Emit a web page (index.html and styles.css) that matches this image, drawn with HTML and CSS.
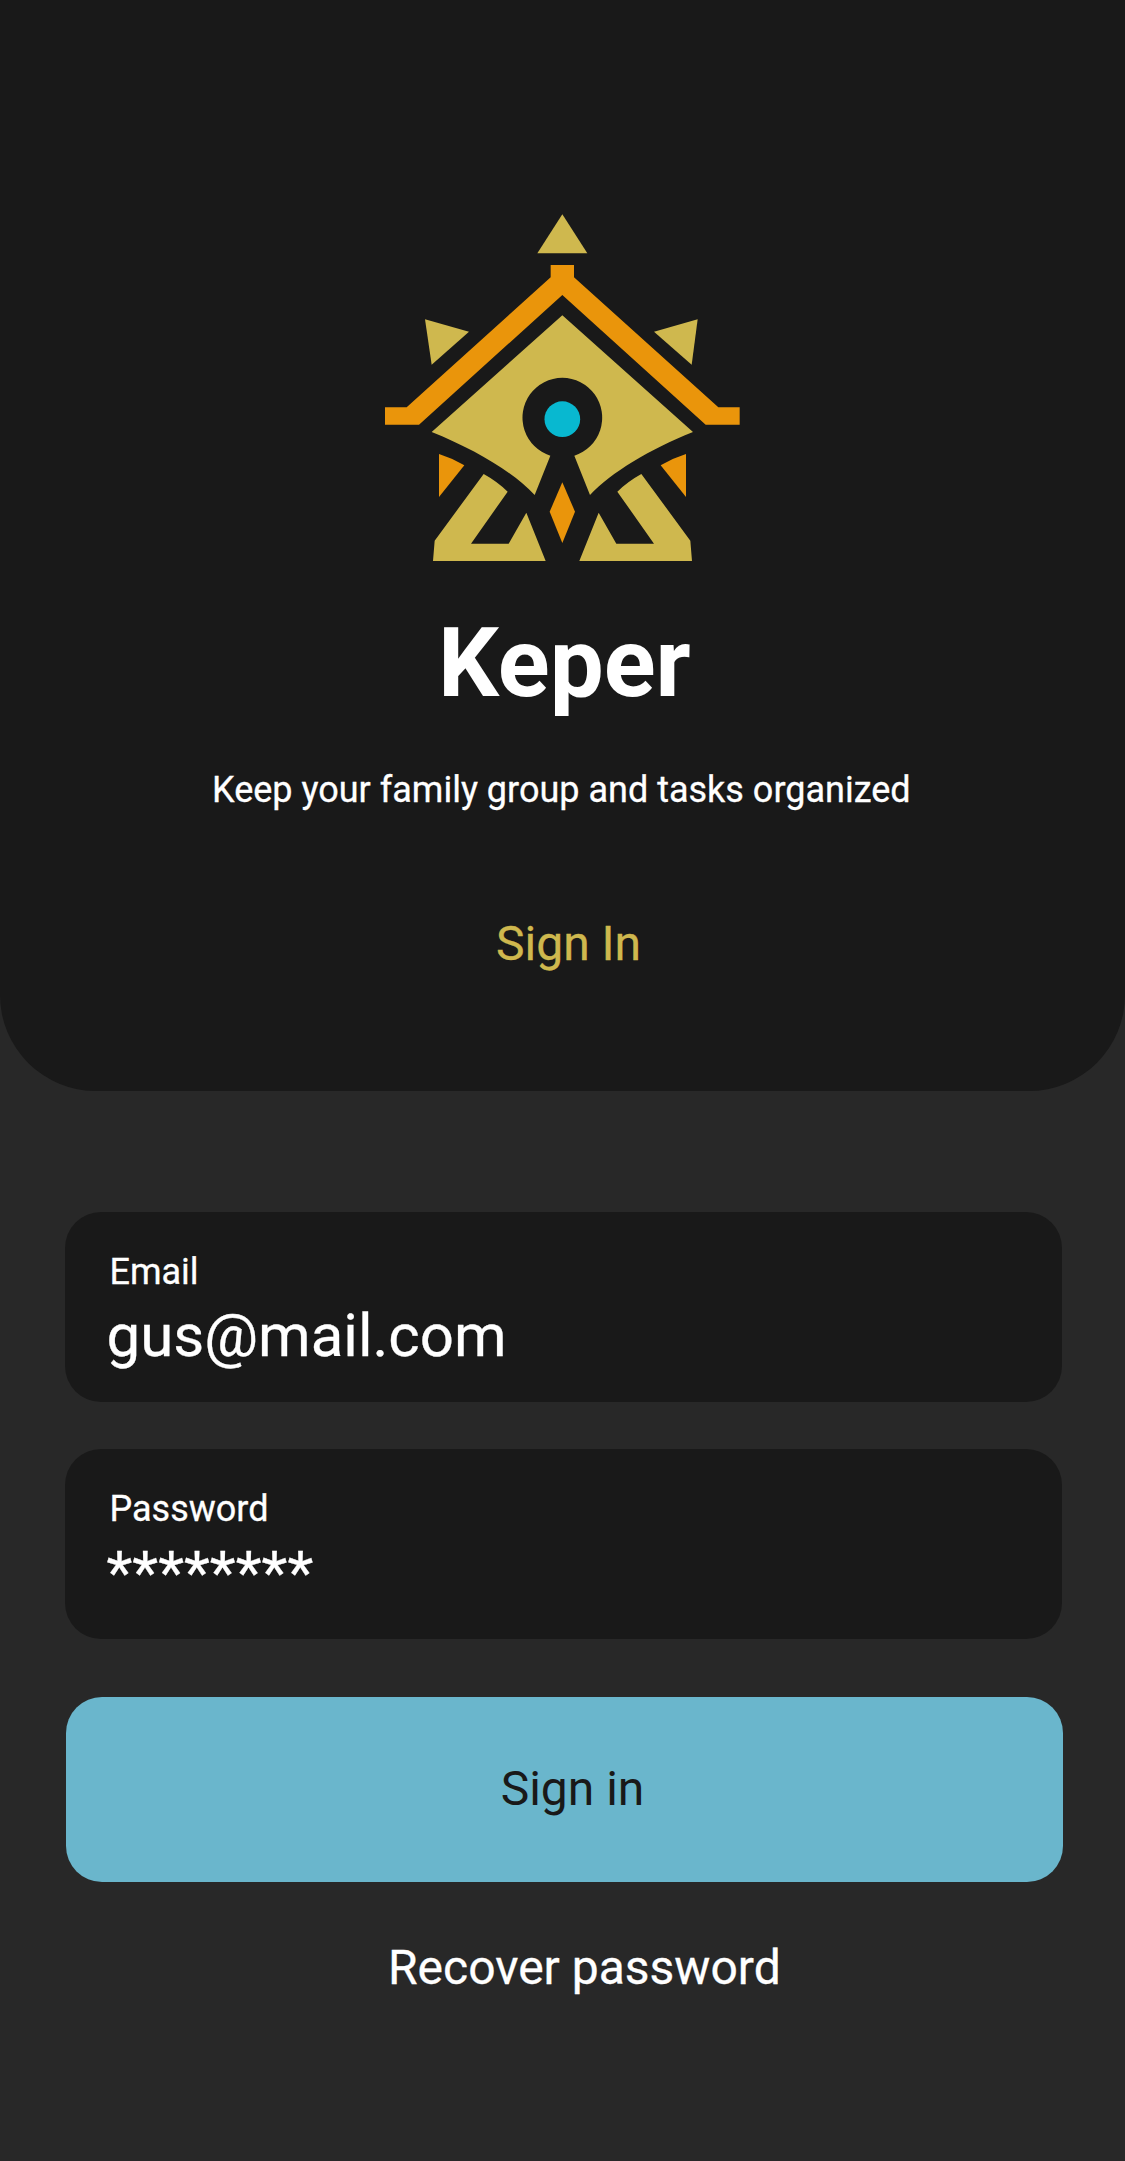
FILE: index.html
```html
<!DOCTYPE html>
<html lang="en">
<head>
<meta charset="utf-8">
<title>Keper</title>
<link rel="stylesheet" href="styles.css">
</head>
<body>
<main class="screen">
  <header class="hero">
    <svg class="logo" viewBox="0 0 1065 1041" role="img" aria-label="Keper logo">
      <defs>
        <g id="side">
          <path class="orange" d="M162 720Q201 732 238 754L162 849Z"/>
          <path class="gold" d="M296 780Q336 802 368 833L258 989H371L424 896L482 1041H144L149 980Z"/>
        </g>
      </defs>
      <path class="gold" d="M532 1L607 118H457Z"/>
      <path class="gold" d="M120 316L252 353L140 452Z"/>
      <path class="gold" d="M938 316L807 353L920 452Z"/>
      <path class="orange" d="M497 153H567V190L1000 580H1064V632H962L532 243L102 632H0V580H65L497 190Z"/>
      <path class="gold" d="M532 304L140 654C270 706 385 775 449 843L496 725A119.500 119.500 0 1 1 568 725L615 843C679 775 794 706 924 654Z"/>
      <circle class="cyan" cx="532" cy="615.500" r="53.500"/>
      <path class="orange" d="M532 805L570 893L532 987L494 893Z"/>
      <use href="#side"/>
      <use href="#side" transform="translate(1065 0) scale(-1 1)"/>
    </svg>
    <h1 class="brand">Keper</h1>
    <p class="tagline">Keep your family group and tasks organized</p>
    <h2 class="mode">Sign In</h2>
  </header>
  <section class="form">
    <div class="field">
      <span class="label">Email</span>
      <span class="value">gus@mail.com</span>
    </div>
    <div class="field">
      <span class="label">Password</span>
      <span class="value">********</span>
    </div>
    <button class="submit" type="button">Sign in</button>
    <a class="recover">Recover password</a>
  </section>
</main>
</body>
</html>
```
FILE: styles.css
```css
* {
  box-sizing: border-box;
}

body {
  margin: 0;
  background: #282828;
  color: #fff;
  font-family: Roboto, "Liberation Sans", sans-serif;
}

.screen {
  display: flex;
  flex-direction: column;
  width: 1125px;
  height: 2161px;
  background: #282828;
}

.hero {
  display: flex;
  flex-direction: column;
  align-items: flex-start;
  height: 1091px;
  padding-top: 214px;
  background: #191919;
  border-radius: 0 0 96px 96px;
}

.logo {
  display: block;
  width: 355px;
  height: 347px;
  margin-left: 385px;
}

.gold {
  fill: #cfb84e;
}

.orange {
  fill: #ea950b;
}

.cyan {
  fill: #08b8d0;
}

.brand {
  margin: 46px 0 0 438px;
  font-size: 96px;
  font-weight: 700;
  line-height: 112px;
}

.tagline,
.mode,
.label,
.value,
.recover {
  -webkit-text-stroke: 0.3px currentColor;
}

.tagline {
  margin: 50px 0 0 212px;
  font-size: 36px;
  line-height: 42px;
}

.mode {
  margin: 105px 0 0 496px;
  color: #cfb84e;
  font-size: 48px;
  font-weight: 400;
  line-height: 56px;
}

.form {
  display: flex;
  flex-direction: column;
  padding: 121px 63px 0 65px;
}

.field {
  display: flex;
  flex-direction: column;
  height: 190px;
  margin-bottom: 47px;
  padding: 39px 41.5px 0;
  background: #191919;
  border-radius: 36px;
}

.label {
  margin-left: 3px;
  font-size: 36px;
  line-height: 42px;
}

.value {
  margin-top: 8px;
  font-size: 60px;
  line-height: 70px;
}

.submit {
  width: 997px;
  height: 185px;
  margin: 11px 0 0 1px;
  padding: 0 0 1px 16px;
  border: 0;
  border-radius: 36px;
  background: #6ab6cc;
  color: #191919;
  font: inherit;
  font-size: 48px;
  line-height: 56px;
}

.recover {
  margin: 58px 0 0 323px;
  font-size: 48px;
  line-height: 56px;
}
```
